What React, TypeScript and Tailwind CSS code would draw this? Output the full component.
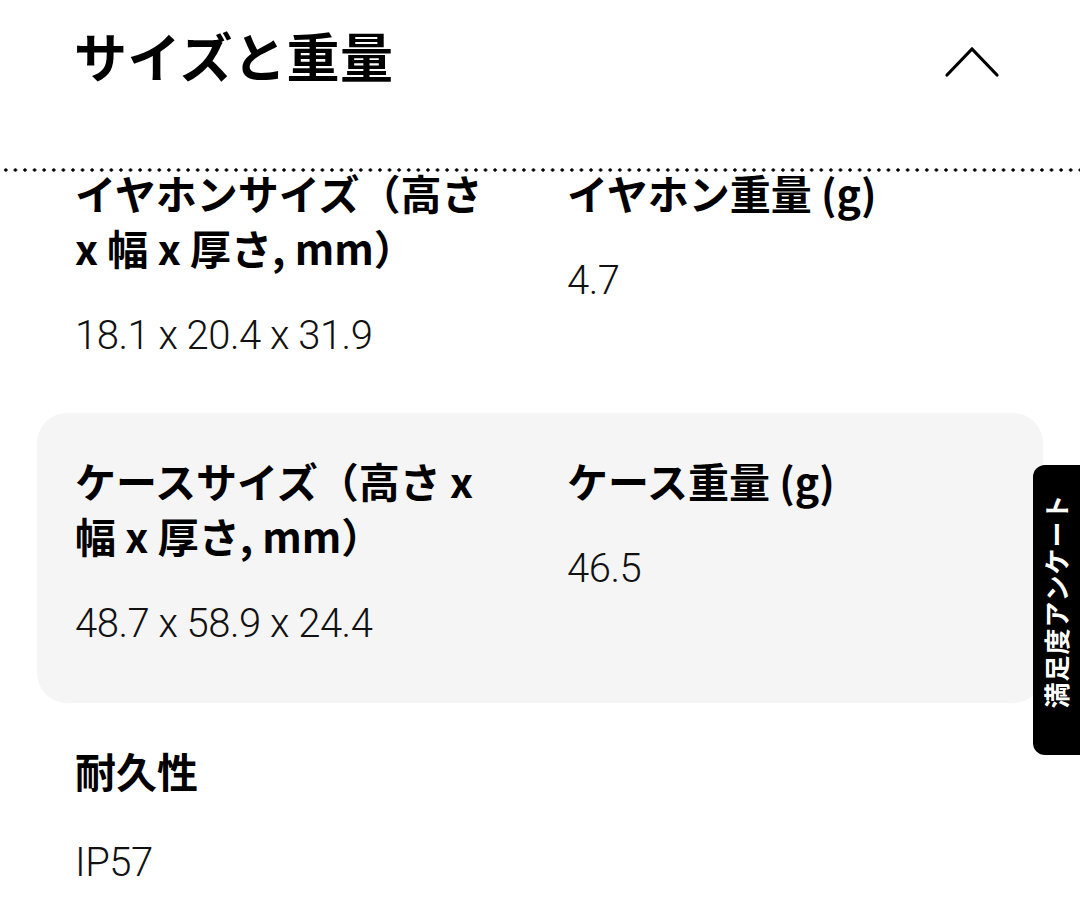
import * as React from 'react';

const jp = '"Noto Sans CJK JP", "Noto Sans", sans-serif';
const num = 'Roboto, "Noto Sans CJK JP", sans-serif';

type Spec = { label: React.ReactNode; value: string };

function SpecCell({ spec }: { spec: Spec }) {
  return (
    <div>
      <div className="text-[41px] font-bold leading-[55px] text-black" style={{ fontFamily: jp }}>
        {spec.label}
      </div>
      <div className="mt-[38px] text-[40px] font-light leading-[46px] tracking-[-0.5px] text-[#111]" style={{ fontFamily: num }}>
        {spec.value}
      </div>
    </div>
  );
}

function SpecRow({ left, right, shaded, className = '' }: { left: Spec; right?: Spec; shaded?: boolean; className?: string }) {
  return (
    <div className={`grid grid-cols-[492px_1fr] rounded-[30px] px-[38px] ${shaded ? 'bg-[#f5f5f5]' : ''} ${className}`}>
      <SpecCell spec={left} />
      {right && <SpecCell spec={right} />}
    </div>
  );
}

export default function App() {
  return (
    <div className="relative h-[898px] w-[1080px] overflow-hidden bg-white" style={{ fontFamily: jp }}>
      <div className="flex h-[168px] items-start justify-between pl-[74px] pr-[80px] pt-[22px]">
        <h2 className="text-[53px] font-bold leading-[66px] tracking-[0.5px] text-black">サイズと重量</h2>
        <svg className="mt-[22px] h-[34px] w-[56px]" viewBox="0 0 56 34" fill="none" stroke="#000" strokeWidth={3.2}>
          <path d="M3 31L28 5l25 26" strokeLinecap="round" strokeLinejoin="miter" />
        </svg>
      </div>
      <div className="h-[4px] w-full bg-[radial-gradient(circle,#000_1.4px,transparent_1.9px)] bg-[length:9.6px_4px] bg-[position:1px_0]" />

      <div className="px-[37px]">
        <SpecRow
          className="-mt-[7px] pb-[54px]"
          left={{
            label: (
              <>
                イヤホンサイズ（高さ
                <br />x 幅 x 厚さ, mm）
              </>
            ),
            value: '18.1 x 20.4 x 31.9',
          }}
          right={{ label: 'イヤホン重量 (g)', value: '4.7' }}
        />
        <SpecRow
          shaded
          className="h-[290px] pt-[40px]"
          left={{
            label: (
              <>
                ケースサイズ（高さ x
                <br />幅 x 厚さ, mm）
              </>
            ),
            value: '48.7 x 58.9 x 24.4',
          }}
          right={{ label: 'ケース重量 (g)', value: '46.5' }}
        />
        <SpecRow className="pt-[40px] [&_div>div:last-child]:mt-[42px]" left={{ label: '耐久性', value: 'IP57' }} />
      </div>

      <div className="absolute right-0 top-[465px] flex h-[290px] w-[47px] items-center justify-center rounded-l-[12px] bg-black pb-[18px]">
        <span className="-rotate-90 whitespace-nowrap text-[26px] font-bold leading-none tracking-[1px] text-white" style={{ fontFamily: jp }}>
          満足度アンケート
        </span>
      </div>
    </div>
  );
}
